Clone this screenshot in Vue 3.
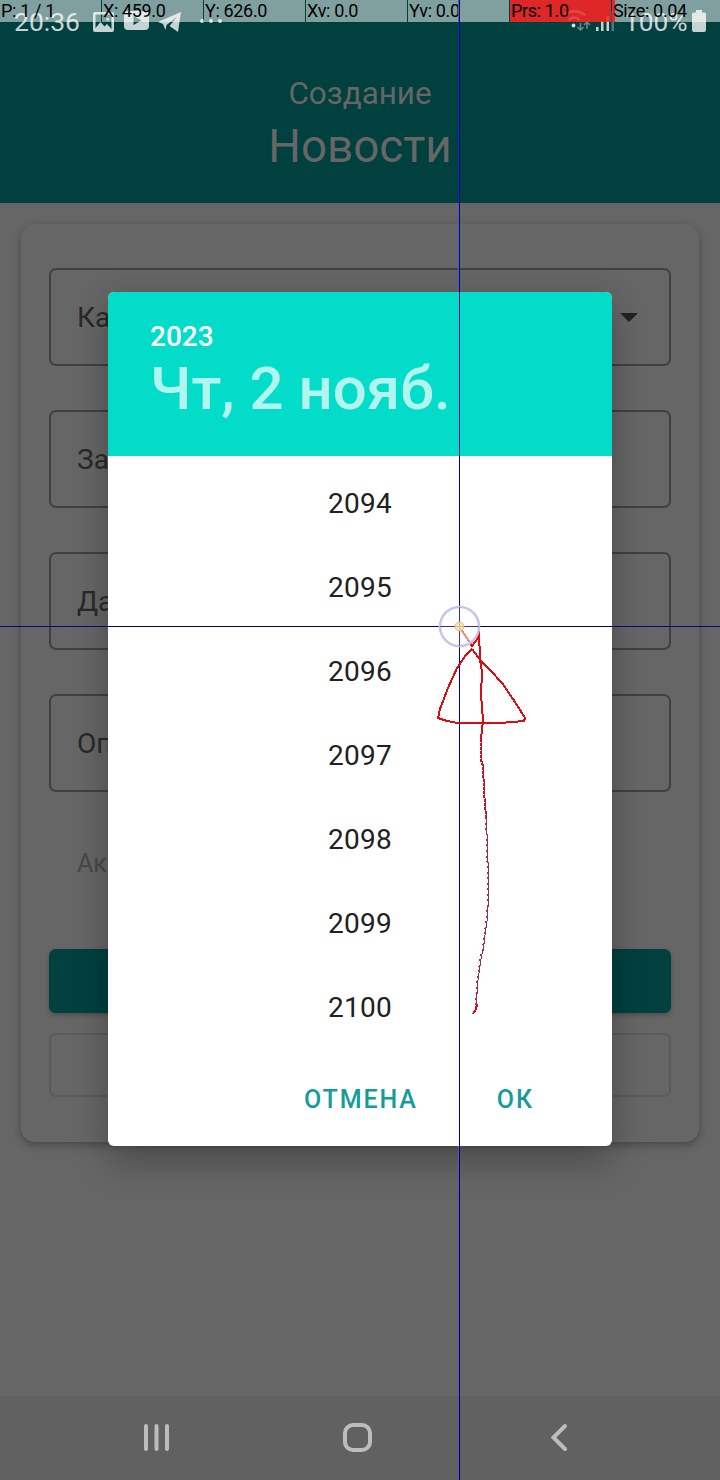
<script setup>
const fields = [
  { label: 'Ка', menu: true },
  { label: 'За' },
  { label: 'Да' },
  { label: 'Оп' },
]
const years = [2094, 2095, 2096, 2097, 2098, 2099, 2100]
const readout = ['P: 1 / 1', 'X: 459.0', 'Y: 626.0', 'Xv: 0.0', 'Yv: 0.0', 'Prs: 1.0', 'Size: 0.04']
</script>

<template>
  <div class="screen">
    <header class="top">
      <div class="status">
        <span class="clock">20:36</span>
        <svg class="status-left" width="132" height="26" viewBox="0 0 132 26">
          <path fill-rule="evenodd" d="M3 2H20Q22 2 22 4V20Q22 22 20 22H3Q1 22 1 20V4Q1 2 3 2ZM3.500 4.500V18L8.500 12L12.500 16.500L15 14L19.500 19V4.500ZM14.500 8H17V10.500H14.500Z" />
          <path fill-rule="evenodd" d="M36 1H53Q57 1 57 5V16Q57 20 53 20H36Q32 20 32 16V5Q32 1 36 1ZM41.500 6V15L49.500 10.500Z" />
          <path d="M66 12L89 2L86 22L77.500 16L85 7L74.500 15L73.500 20L71 14Z" />
          <circle cx="110" cy="11" r="1.900" /><circle cx="119" cy="11" r="1.900" /><circle cx="128" cy="11" r="1.900" />
        </svg>
        <svg class="signals" width="54" height="24" viewBox="0 0 54 24">
          <circle cx="10.500" cy="15.500" r="1.900" fill="#d5dede" />
          <path d="M17.500 13V20M14.500 17L17.500 20L20.500 17M24 19V12M21 15L24 12L27 15" fill="none" stroke="#678686" stroke-width="1.600" />
          <path d="M33 17h2.500v4h-2.500zM38 11h2.500v10h-2.500zM43.500 6h2.500v15h-2.500z" />
          <path d="M48.500 1h2.500v20h-2.500z" opacity=".4" />
        </svg>
        <span class="percent">100%</span>
        <svg class="battery" width="14" height="22" viewBox="0 0 14 22"><path d="M4 0h6v2.500h2.500q1.500 0 1.500 1.500v16q0 2-2 2H2q-2 0-2-2V4q0-1.500 1.500-1.500H4z" /></svg>
      </div>
      <div class="create">Создание</div>
      <h1>Новости</h1>
    </header>

    <main class="card">
      <div v-for="f in fields" :key="f.label" class="field">
        <span>{{ f.label }}</span>
        <svg v-if="f.menu" width="18" height="9" viewBox="0 0 18 9"><path d="M0 0H18L9 9Z" fill="#222" /></svg>
      </div>
      <div class="active">Ак</div>
      <div class="primary"></div>
      <div class="secondary"></div>
    </main>

    <nav class="nav">
      <svg width="720" height="84" viewBox="0 0 720 84" fill="none" stroke="#bdbdbd" stroke-width="4" stroke-linecap="round">
        <path d="M146 30V53M156.500 30V53M167 30V53" />
        <rect x="345" y="29" width="25" height="25" rx="8" />
        <path d="M565 30L553.500 41.500L565 53" />
      </svg>
    </nav>

    <section class="dialog">
      <div class="dialog-head">
        <div class="picked-year">2023</div>
        <div class="picked-date">Чт, 2 нояб.</div>
      </div>
      <div class="years">
        <div v-for="y in years" :key="y" class="year">{{ y }}</div>
      </div>
      <div class="actions">
        <span class="cancel">ОТМЕНА</span>
        <span class="ok">ОК</span>
      </div>
    </section>

    <div class="readout">
      <div v-for="(r, i) in readout" :key="r" class="cell" :class="{ pressure: i === 5, size: i === 6 }">
        <svg v-if="i === 5" class="wifi" width="101" height="22" viewBox="510 0 101 22" fill="none" stroke="#e64646" stroke-width="2.500">
          <path d="M564.500 15Q574 7.500 585.500 15M568.500 20Q574 15 579.500 20" />
        </svg>
        <span>{{ r }}</span>
      </div>
    </div>

    <svg class="pointer" width="720" height="1480" viewBox="0 0 720 1480" fill="none">
      <g shape-rendering="crispEdges">
        <path d="M459.500 0V1480M0 626.500H720" stroke="#00006f" />
        <path d="M0 626.500H108M612 626.500H720M459.500 0V292" stroke="#06068c" />
        <path d="M458.500 0V22M458.500 203V292M458.500 1146V1480" stroke="#5959a5" />
        <path d="M458.500 22V203" stroke="#10308a" />
      </g>
      <g stroke="#dc0c12" stroke-width="2" shape-rendering="crispEdges">
        <path d="M461 629L472 646L478 638L479 631L480 660L482 672L481 694L483 720L481 739" />
        <path d="M472 649L481 661L490 670L502 683L513 699L522 713L525 718L524 721L512 722L500 723L458 723L447 721L438 718L440 709L448 688L457 668L466 655L472 649" />
        <path d="M477 1004L476 1009L473 1014" />
      </g>
      <path d="M481.500 735V760L483.500 766L484.500 791L486.500 817L487.500 850L488.500 873V897L487.500 918L485.500 931L483.500 949L481.500 956L479.500 970L477.500 983L476.500 1005" stroke="#4a4396" shape-rendering="crispEdges" />
      <path d="M481 735V760L483 766L484 791L486 817" stroke="#dc0c12" stroke-width="2" stroke-dasharray="3 1" shape-rendering="crispEdges" />
      <path d="M486 817L487 850L488 873V897L487 918L485 931L483 949L481 956L479 970L477 983L476 1005" stroke="#d81b2d" stroke-width="2" stroke-dasharray="2 3.500" shape-rendering="crispEdges" />
      <circle cx="459.500" cy="626.500" r="19.500" fill="#fff" fill-opacity=".5" stroke="#c3c6ea" stroke-width="2.500" />
      <path d="M459.500 607V646M440 626.500H479" stroke="#00006f" stroke-opacity=".6" shape-rendering="crispEdges" />
      <circle cx="459.500" cy="626.500" r="4.500" fill="#f6df9a" fill-opacity=".8" stroke="#eab58a" />
    </svg>
  </div>
</template>

<style>
body { margin: 0; }
</style>
<style scoped>
.screen { position: relative; width: 720px; height: 1480px; overflow: hidden; background: #666; font-family: Roboto, sans-serif; }
.top { height: 203px; background: #00403f; text-align: center; color: #666; }
.status { height: 48px; position: relative; color: #c7d3d3; }
.status svg { fill: #c7d3d3; }
.clock, .percent, .status-left, .signals, .battery { position: absolute; }
.clock { left: 14px; top: 6px; font-size: 26.500px; line-height: 32px; }
.percent { left: 624px; top: 6px; font-size: 26.300px; line-height: 32px; }
.status-left { left: 92px; top: 10px; }
.signals { left: 563px; top: 10px; }
.battery { left: 692px; top: 10px; }
.create { padding-top: 27px; font-size: 31.400px; line-height: 38px; }
h1 { margin: 6px 0 0; font-size: 45.800px; line-height: 56px; font-weight: 400; }
.card { box-sizing: border-box; margin: 21px 21px 0; height: 918px; padding: 44px 28px 0; border-radius: 14px; background: #666; box-shadow: 0 3px 9px rgba(0,0,0,.3); }
.field { box-sizing: border-box; height: 98px; margin-bottom: 44px; border: 2px solid #404040; border-radius: 7px; padding: 0 31px 0 26px; display: flex; align-items: center; justify-content: space-between; color: #292929; font-size: 28px; }
.active { height: 32px; margin-top: 56px; padding-left: 28px; color: #484848; font-size: 25px; line-height: 32px; }
.primary { height: 64px; margin-top: 69px; border-radius: 7px; background: #00403f; box-shadow: 0 2px 4px rgba(0,0,0,.25); }
.secondary { box-sizing: border-box; height: 64px; margin-top: 20px; border: 2px solid #5b5b5b; border-radius: 7px; }
.nav { position: absolute; left: 0; bottom: 0; height: 84px; background: #616161; }
.nav svg { display: block; }
.dialog { position: absolute; left: 108px; top: 292px; width: 504px; height: 854px; border-radius: 6px; overflow: hidden; background: #fff; box-shadow: 0 18px 36px rgba(0,0,0,.22), 0 0 30px rgba(0,0,0,.08); }
.dialog-head { box-sizing: border-box; height: 164px; padding: 28px 42px 0; background: #03dcc9; color: #fff; font-weight: 500; }
.picked-year { font-size: 28px; line-height: 33px; }
.picked-date { padding-top: 1px; font-size: 60px; line-height: 70px; color: #b1f5ee; white-space: nowrap; }
.years { padding-top: 6px; }
.year { height: 84px; line-height: 84px; text-align: center; font-size: 28px; color: #212121; letter-spacing: .3px; }
.actions { display: flex; height: 96px; line-height: 96px; padding: 2px 78px 0 0; justify-content: flex-end; gap: 79px; color: #139c98; font-size: 25px; font-weight: 500; letter-spacing: 1.900px; }
.readout { position: absolute; left: 0; top: 0; width: 720px; height: 22px; display: flex; gap: 1px; }
.cell { position: relative; flex: 0 0 101px; height: 22px; padding-left: 1px; box-sizing: border-box; background: rgba(255,255,255,.5); color: #000; font-size: 18px; letter-spacing: -.35px; line-height: 22px; white-space: nowrap; }
.cell span { position: relative; }
.wifi { position: absolute; left: 0; top: 0; }
.pressure { background: rgba(255,36,36,.87); }
.size { flex: 1; background: linear-gradient(90deg, #e02c2c 0 3px, rgba(255,255,255,.5) 3px); }
.pointer { position: absolute; left: 0; top: 0; pointer-events: none; }
</style>
